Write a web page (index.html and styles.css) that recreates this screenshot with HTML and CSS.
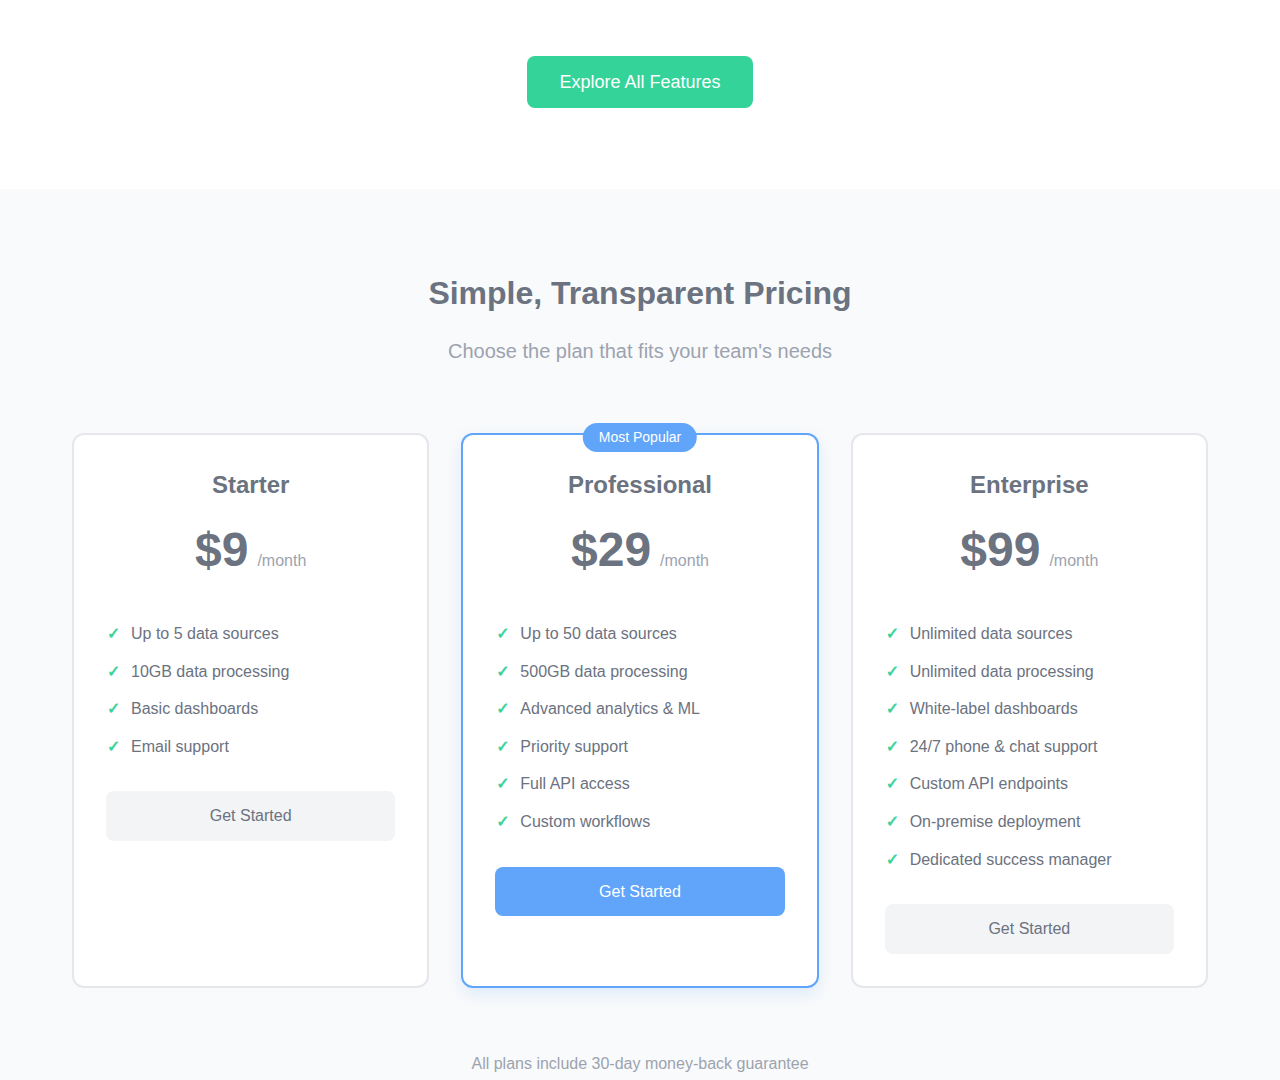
FILE: index.html
```html
<!DOCTYPE html>
<html lang="en">
<head>
<meta charset="utf-8">
<title>Pricing</title>
<link rel="stylesheet" href="styles.css">
</head>
<body>
<section class="hero">
  <a class="btn-explore" href="#">Explore All Features</a>
</section>
<section class="pricing">
  <h2 class="pricing-title">Simple, Transparent Pricing</h2>
  <p class="pricing-sub">Choose the plan that fits your team's needs</p>
  <div class="plans">
    <div class="plan">
      <h3 class="plan-name">Starter</h3>
      <div class="plan-price"><span class="amount">$9</span><span class="per">/month</span></div>
      <ul class="features">
        <li><span class="check">✓</span><span>Up to 5 data sources</span></li>
        <li><span class="check">✓</span><span>10GB data processing</span></li>
        <li><span class="check">✓</span><span>Basic dashboards</span></li>
        <li><span class="check">✓</span><span>Email support</span></li>
      </ul>
      <a class="btn-plan" href="#">Get Started</a>
    </div>
    <div class="plan plan-featured">
      <span class="badge">Most Popular</span>
      <h3 class="plan-name">Professional</h3>
      <div class="plan-price"><span class="amount">$29</span><span class="per">/month</span></div>
      <ul class="features">
        <li><span class="check">✓</span><span>Up to 50 data sources</span></li>
        <li><span class="check">✓</span><span>500GB data processing</span></li>
        <li><span class="check">✓</span><span>Advanced analytics &amp; ML</span></li>
        <li><span class="check">✓</span><span>Priority support</span></li>
        <li><span class="check">✓</span><span>Full API access</span></li>
        <li><span class="check">✓</span><span>Custom workflows</span></li>
      </ul>
      <a class="btn-plan btn-primary" href="#">Get Started</a>
    </div>
    <div class="plan">
      <h3 class="plan-name">Enterprise</h3>
      <div class="plan-price"><span class="amount">$99</span><span class="per">/month</span></div>
      <ul class="features">
        <li><span class="check">✓</span><span>Unlimited data sources</span></li>
        <li><span class="check">✓</span><span>Unlimited data processing</span></li>
        <li><span class="check">✓</span><span>White-label dashboards</span></li>
        <li><span class="check">✓</span><span>24/7 phone &amp; chat support</span></li>
        <li><span class="check">✓</span><span>Custom API endpoints</span></li>
        <li><span class="check">✓</span><span>On-premise deployment</span></li>
        <li><span class="check">✓</span><span>Dedicated success manager</span></li>
      </ul>
      <a class="btn-plan" href="#">Get Started</a>
    </div>
  </div>
  <p class="guarantee">All plans include 30-day money-back guarantee</p>
</section>
</body>
</html>
```
FILE: styles.css
```css
* { box-sizing: border-box; }
html, body { margin: 0; padding: 0; }
body {
  font-family: "Liberation Sans", Arial, sans-serif;
  background: #ffffff;
  color: #6b7280;
}
.hero {
  background: #ffffff;
  padding: 56px 0 81px;
  display: flex;
  justify-content: center;
}
.btn-explore {
  display: inline-block;
  background: #34d399;
  color: #ffffff;
  text-decoration: none;
  font-size: 18px;
  line-height: 28px;
  padding: 12px 32px;
  border-radius: 8px;
}
.pricing {
  background: #f9fafb;
  padding: 80px 72px 8px;
  text-align: center;
}
.pricing-title {
  margin: 0;
  font-size: 32px;
  line-height: 48px;
  font-weight: 700;
  color: #6b7280;
}
.pricing-sub {
  margin: 19px 0 0;
  font-size: 20px;
  line-height: 30px;
  color: #9ca3af;
}
.plans {
  margin: 67px auto 0;
  max-width: 1136px;
  display: grid;
  grid-template-columns: repeat(3, 1fr);
  gap: 32px;
}
.plan {
  position: relative;
  background: #ffffff;
  border: 2px solid #e5e7eb;
  border-radius: 12px;
  padding: 32px;
  display: flex;
  flex-direction: column;
  text-align: center;
}
.plan-featured {
  border-color: #60a5fa;
  box-shadow: 0 6px 16px rgba(96, 165, 250, 0.18);
}
.badge {
  position: absolute;
  top: -12px;
  left: 50%;
  transform: translateX(-50%);
  background: #60a5fa;
  color: #ffffff;
  font-size: 14px;
  line-height: 20px;
  padding: 4px 16px 5px;
  border-radius: 999px;
  white-space: nowrap;
}
.plan-name {
  margin: 0 0 23px;
  font-size: 24px;
  line-height: 36px;
  font-weight: 700;
  color: #6b7280;
}
.plan-price {
  display: flex;
  justify-content: center;
  align-items: baseline;
  line-height: 48px;
  margin-bottom: 36px;
}
.amount {
  font-size: 48px;
  font-weight: 700;
  color: #6b7280;
}
.per {
  font-size: 16px;
  color: #9ca3af;
  margin-left: 9px;
}
.features {
  list-style: none;
  margin: 0 0 20px;
  padding: 0;
  text-align: left;
}
.features li {
  display: flex;
  align-items: baseline;
  font-size: 16px;
  line-height: 25.6px;
  height: 25.6px;
  margin-bottom: 12px;
  color: #6b7280;
}
.check {
  width: 25px;
  flex: none;
  color: #34d399;
  font-size: 16px;
  line-height: 16px;
  font-weight: 700;
  padding-left: 1px;
  font-family: "DejaVu Sans", sans-serif;
  -webkit-text-stroke: 0.6px #34d399;
}
.btn-plan {
  display: block;
  background: #f3f4f6;
  color: #6b7280;
  text-decoration: none;
  font-size: 16px;
  line-height: 25.6px;
  padding: 12px;
  border-radius: 8px;
  text-align: center;
}
.btn-primary {
  background: #60a5fa;
  color: #ffffff;
}
.guarantee {
  margin: 64px 0 0;
  font-size: 16px;
  line-height: 24px;
  color: #9ca3af;
}
```
